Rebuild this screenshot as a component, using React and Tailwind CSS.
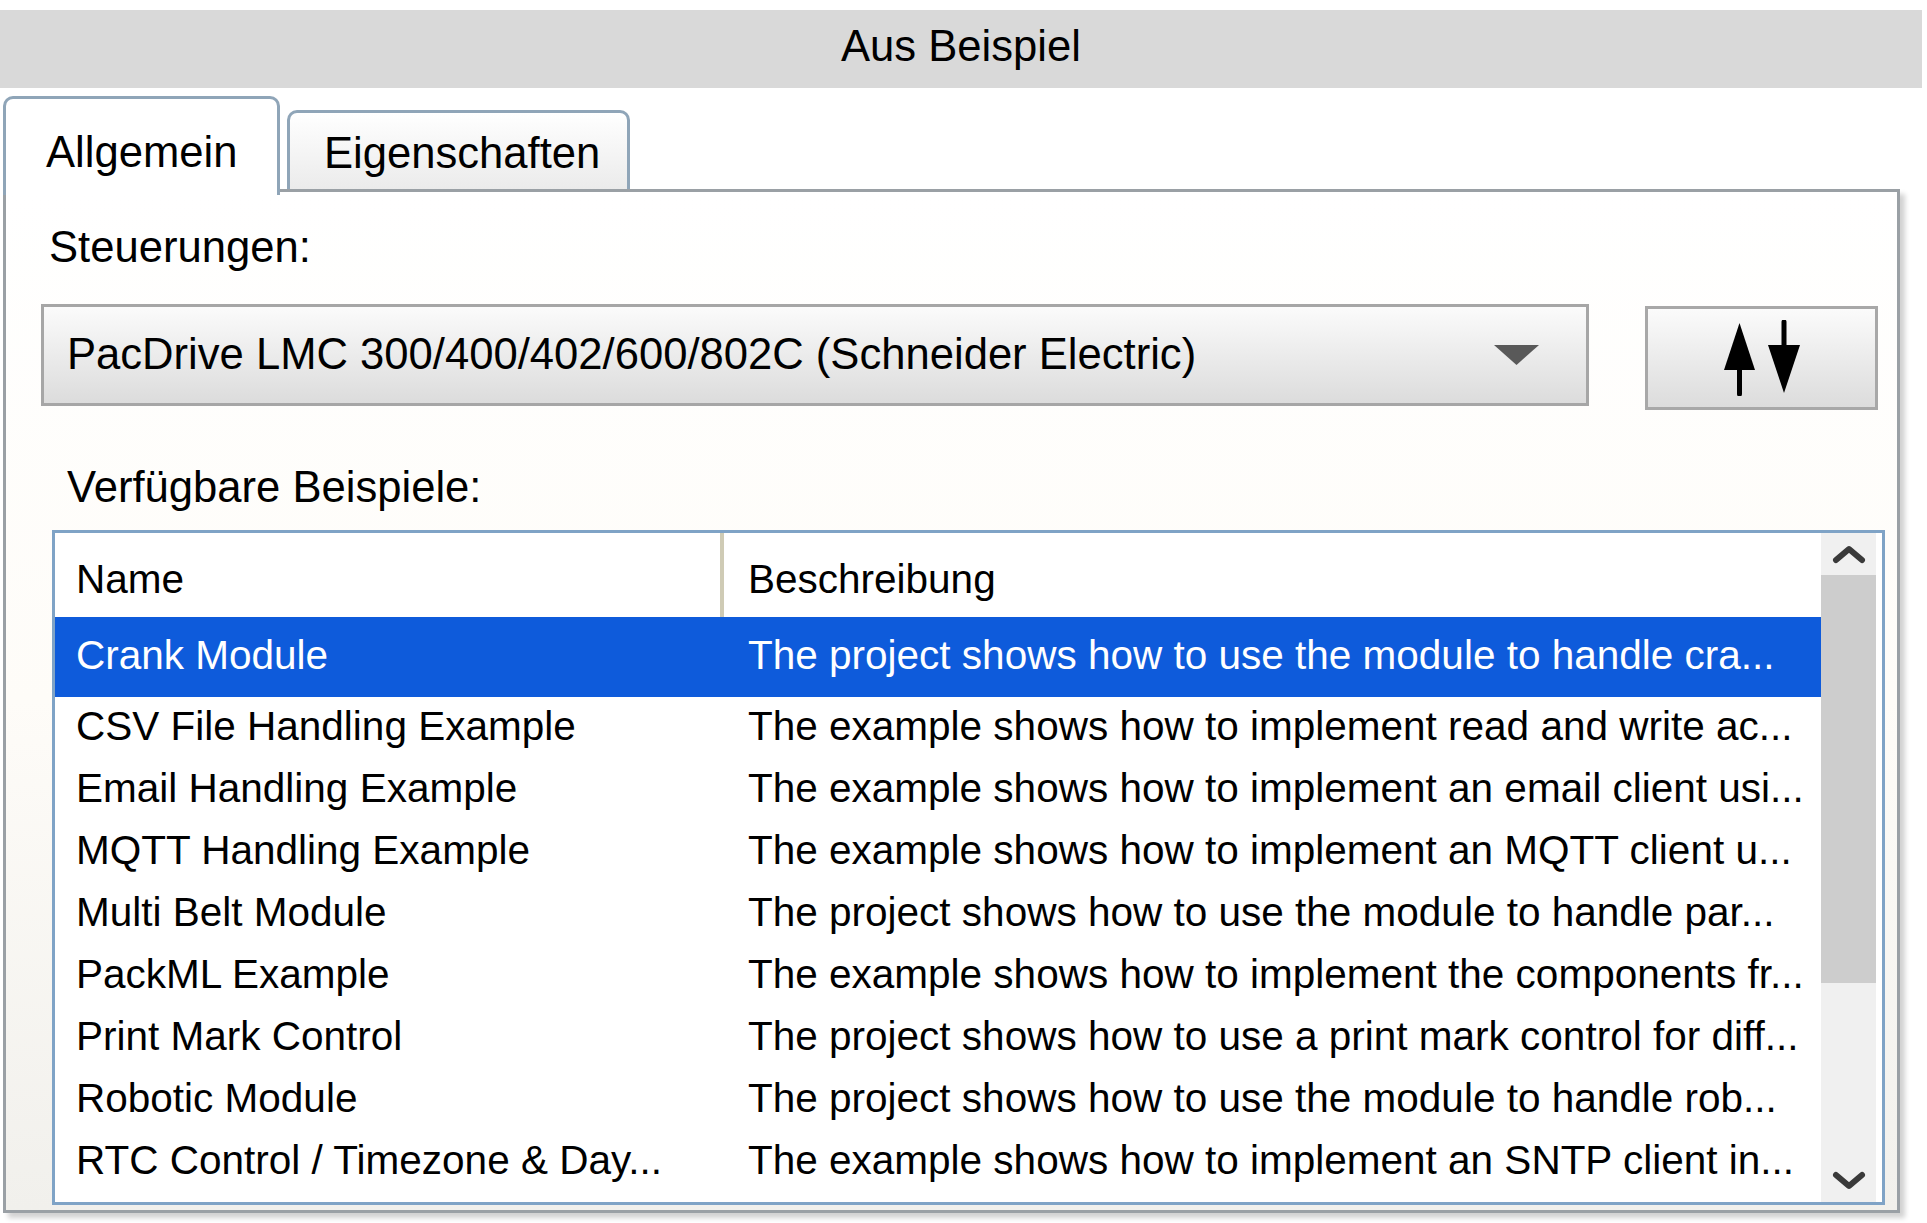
import React from 'react';

const rows = [
  ['Crank Module', 'The project shows how to use the module to handle cra...'],
  ['CSV File Handling Example', 'The example shows how to implement read and write ac...'],
  ['Email Handling Example', 'The example shows how to implement an email client usi...'],
  ['MQTT Handling Example', 'The example shows how to implement an MQTT client u...'],
  ['Multi Belt Module', 'The project shows how to use the module to handle par...'],
  ['PackML Example', 'The example shows how to implement the components fr...'],
  ['Print Mark Control', 'The project shows how to use a print mark control for diff...'],
  ['Robotic Module', 'The project shows how to use the module to handle rob...'],
  ['RTC Control / Timezone & Day...', 'The example shows how to implement an SNTP client in...'],
];

const Chevron = ({ down }) => (
  <svg width="34" height="22" viewBox="0 0 34 22">
    <polyline
      points={down ? '4,5 17,16 30,5' : '4,17 17,6 30,17'}
      fill="none"
      stroke="#3a3a3a"
      strokeWidth="6"
      strokeLinejoin="round"
      strokeLinecap="round"
    />
  </svg>
);

const SwapIcon = () => (
  <svg width="76" height="76" viewBox="0 0 76 76">
    <polygon points="0,50 31,50 15.5,3" fill="#000" />
    <line x1="15.5" y1="48" x2="15.5" y2="74" stroke="#000" strokeWidth="5" strokeLinecap="round" />
    <line x1="60" y1="2" x2="60" y2="27" stroke="#000" strokeWidth="5" strokeLinecap="round" />
    <polygon points="44,25 76,25 60,73" fill="#000" />
  </svg>
);

export default function App() {
  return (
    <div className="w-[1927px] h-[1223px] bg-white pt-[10px] font-[family-name:'Liberation_Sans',Arial,sans-serif] text-black overflow-hidden">
      {/* title */}
      <div className="w-[1922px] h-[78px] bg-[#d9d9d9] flex items-center justify-center text-[43.6px] pb-[4px]">
        Aus Beispiel
      </div>

      {/* tabs */}
      <div className="flex items-end gap-[7px] pl-[3px] mt-[8px] h-[96px]">
        <div className="relative z-10 -mb-[3px] h-[99px] w-[277px] bg-white border-[3px] border-b-0 border-[#8fa5b8] rounded-t-[10px] pl-[40px] pt-[11px] flex items-center text-[43.6px]">
          Allgemein
        </div>
        <div className="h-[79px] w-[343px] bg-linear-to-b from-white to-[#ebebeb] border-[3px] border-b-0 border-[#8fa5b8] rounded-t-[10px] pl-[34px] pt-[5px] flex items-center text-[43.6px] mb-[3px]">
          Eigenschaften
        </div>
      </div>

      {/* panel */}
      <div className="ml-[3px] -mt-[3px] w-[1897px] h-[1024px] border-[3px] border-[#9aa0a5] bg-linear-to-b from-white via-[#fefcf8] to-[#f1f0ec] shadow-[5px_5px_5px_rgba(0,0,0,0.18)]">
        <div className="mt-[30px] h-[50px] leading-[50px] pl-[43px] text-[43.6px]">Steuerungen:</div>

        <div className="flex items-start mt-[32px] pl-[35px]">
          <div className="w-[1548px] h-[102px] border-[3px] border-[#a6a6a6] bg-linear-to-b from-[#fbfbfb] to-[#dcdcdc] flex items-center justify-between pl-[23px] pr-[47px]">
            <span className="text-[43.6px] whitespace-nowrap">PacDrive LMC 300/400/402/600/802C (Schneider Electric)</span>
            <svg width="45" height="20" viewBox="0 0 45 20">
              <polygon points="0,0 45,0 22.5,20" fill="#595959" />
            </svg>
          </div>
          <div className="ml-[56px] mt-[2px] w-[233px] h-[104px] border-[3px] border-[#a8a8a8] bg-linear-to-b from-[#fbfbfb] to-[#dcdcdc] flex items-center justify-center">
            <SwapIcon />
          </div>
        </div>

        <div className="mt-[52px] h-[50px] leading-[50px] pl-[61px] text-[43.6px]">Verfügbare Beispiele:</div>

        {/* list */}
        <div className="ml-[46px] mt-[18px] w-[1833px] h-[675px] border-[3px] border-[#7fa3c6] bg-white flex">
          <div className="flex-1 flex flex-col min-w-0">
            <div className="h-[84px] flex text-[40.5px]">
              <div className="w-[669px] border-r-[4px] border-[#cfcbb5] pl-[21px] pt-[8px] flex items-center">Name</div>
              <div className="flex-1 pl-[24px] pt-[8px] flex items-center">Beschreibung</div>
            </div>
            {rows.map(([name, desc], i) => (
              <div
                key={name}
                className={
                  i === 0
                    ? 'h-[80px] flex items-center bg-[#0e5bdb] text-white text-[40.5px] whitespace-nowrap pb-[3px]'
                    : 'h-[62px] flex items-center text-[40.5px] whitespace-nowrap pb-[3px]'
                }
              >
                <div className="w-[669px] pl-[21px] overflow-hidden">{name}</div>
                <div className="flex-1 pl-[24px] overflow-hidden">{desc}</div>
              </div>
            ))}
          </div>

          {/* scrollbar */}
          <div className="w-[55px] mr-[6px] bg-[#f0f0f0] flex flex-col">
            <div className="h-[42px] flex items-center justify-center">
              <Chevron />
            </div>
            <div className="h-[408px] bg-[#cdcdcd]" />
            <div className="flex-1" />
            <div className="h-[42px] flex items-center justify-center">
              <Chevron down />
            </div>
          </div>
        </div>
      </div>
    </div>
  );
}
